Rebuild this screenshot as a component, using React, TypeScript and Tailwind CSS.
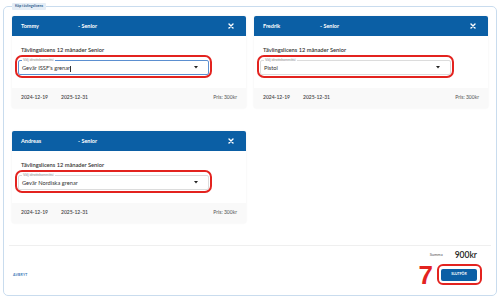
import React from 'react';

interface LicenseCardProps {
  name: string;
  value: string;
  focused?: boolean;
}

function CloseIcon() {
  return (
    <svg width="6" height="6" viewBox="0 0 6 6" className="ml-auto">
      <path d="M1 1L5 5M5 1L1 5" stroke="white" strokeWidth="1.4" strokeLinecap="round" />
    </svg>
  );
}

function LicenseCard({ name, value, focused }: LicenseCardProps) {
  return (
    <div className="h-[92px] flex flex-col bg-white rounded-[2px] shadow-[0_0_2px_rgba(0,0,0,0.08)]">
      <div className="h-[20px] bg-[#0b5fa5] rounded-t-[2px] flex items-center pl-[9px] pr-[12px] text-white font-bold text-[5.5px]">
        <span className="w-[57px]">{name}</span>
        <span>- Senior</span>
        <CloseIcon />
      </div>
      <div className="flex-1 pt-[10px]">
        <div className="pl-[9px] text-[5.7px] leading-[7px] font-semibold text-[#333]">
          Tävlingslicens 12 månader Senior
        </div>
        <div className="ml-[3px] mt-[2px] w-[197px] h-[23px] border-2 border-[#e3231f] rounded-[7px] pt-[3px] pl-[1px] pr-[1px]">
          <div
            className={
              'relative h-[15px] rounded-[2px] border flex items-center pl-[3px] pr-[10px] ' +
              (focused ? 'border-[#5b8fd0]' : 'border-[#dcdcdc]')
            }
          >
            <span className="absolute left-[3px] top-[-3px] bg-white px-[1px] text-[3.5px] leading-[5px] text-[#8a8a8a]">
              Välj idrottskommitté
            </span>
            <span className="text-[5.7px] text-[#333] pt-[2px]">
              {value}
              {focused && <span className="inline-block w-[0.5px] h-[6px] bg-[#333] align-middle" />}
            </span>
            <svg width="4" height="3" viewBox="0 0 4 3" className="ml-auto">
              <path d="M0 0H4L2 2.4Z" fill="#222" />
            </svg>
          </div>
        </div>
      </div>
      <div className="h-[20px] bg-[#f9f9f9] flex items-center pl-[9px] pr-[9px] text-[5px] font-semibold text-[#444]">
        <span className="w-[40px]">2024-12-19</span>
        <span>2025-12-31</span>
        <span className="ml-auto font-normal text-[#555]">Pris: 300kr</span>
      </div>
    </div>
  );
}

export default function App() {
  return (
    <div className="w-[500px] h-[299px] bg-white overflow-hidden pt-[3px] px-[3px] font-['Lato','Liberation_Sans',sans-serif]">
      <fieldset className="h-[293px] border border-[#c9dcee] rounded-[5px] px-[8px]">
        <legend className="bg-[#e4edf6] text-[#2d5a8a] text-[3.5px] font-bold leading-[7px] px-[3px] rounded-[1px]">
          Köp tävlingslicens
        </legend>
        <div className="h-[279px] flex flex-col pt-[6px]">
          <div className="grid grid-cols-2 gap-x-[8px] gap-y-[23px]">
            <LicenseCard name="Tommy" value="Gevär ISSF's grenar" focused />
            <LicenseCard name="Fredrik" value="Pistol" />
            <LicenseCard name="Andreas" value="Gevär Nordiska grenar" />
          </div>
          <div className="mt-[22px] -mx-[3px] h-px bg-[#efefef]" />
          <div className="flex-1 flex items-end justify-between pb-[4px]">
            <span className="mb-[7px] ml-[1px] text-[3.5px] font-bold text-[#3b78b8] tracking-[0.2px]">AVBRYT</span>
            <div className="flex flex-col items-end mr-[6px]">
              <div className="flex items-center gap-[12px] mr-[5px]">
                <span className="text-[4px] text-[#555]">Summa</span>
                <span className="text-[8.5px] leading-[10px] font-semibold text-[#222]">900kr</span>
              </div>
              <div className="flex items-center gap-[4px] mt-[4px]">
                <span className="font-['Liberation_Sans',sans-serif] font-bold text-[26px] leading-[20px] text-[#e3231f]">7</span>
                <div className="h-[21px] border-2 border-[#e3231f] rounded-[6px] flex items-center pl-[2px] pr-[3px]">
                  <div className="w-[36px] h-[12px] bg-[#0b5fa5] rounded-[2px] flex items-center justify-center text-white text-[3.5px] font-bold">
                    SLUTFÖR
                  </div>
                </div>
              </div>
            </div>
          </div>
        </div>
      </fieldset>
    </div>
  );
}
